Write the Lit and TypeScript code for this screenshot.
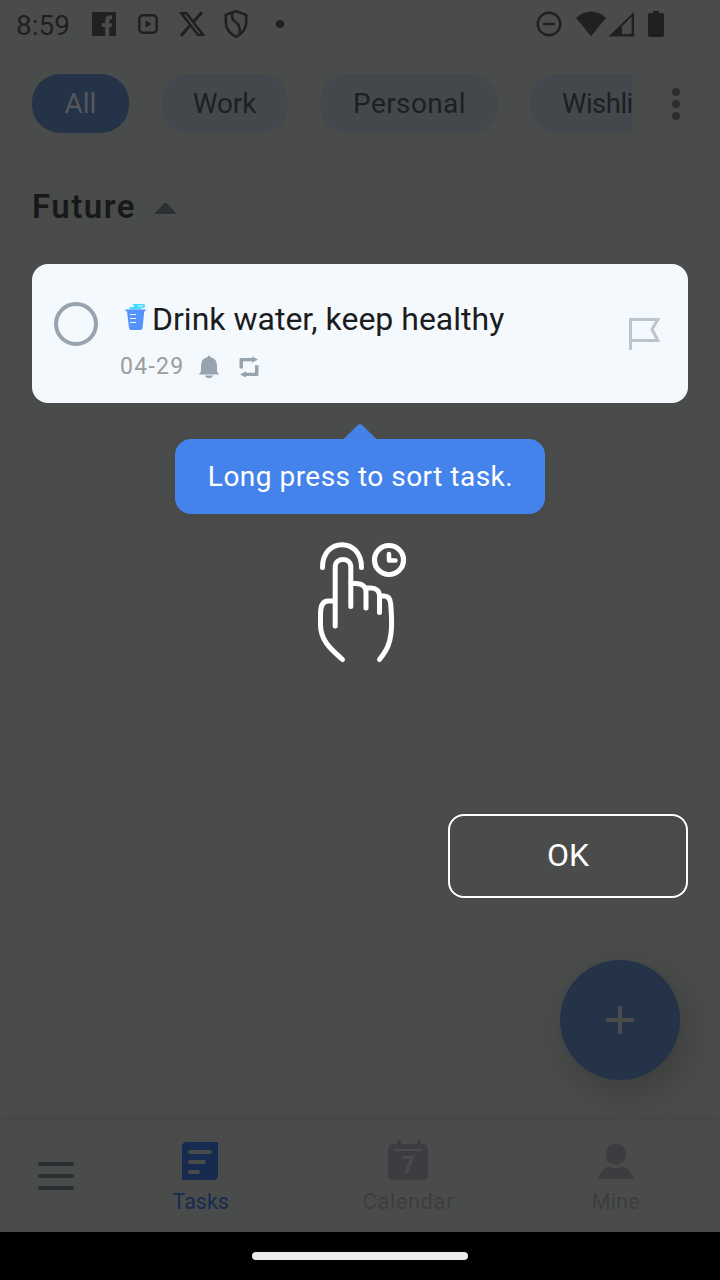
import { LitElement, html, css } from "lit";
import { customElement } from "lit/decorators.js";

@customElement("status-bar")
class StatusBar extends LitElement {
  static styles = css`
    :host { display: flex; height: 48px; color: #1f201f; }
    svg { display: block; fill: currentColor; }
    .time { width: 76px; padding-left: 16px; box-sizing: border-box; font: 28px/51px Roboto, sans-serif; white-space: nowrap; }
  `;
  render() {
    return html`
      <div class="time">8:59</div>
      <svg width="644" height="48" viewBox="76 0 644 48">
        <path d="M92 12H116V36H109.300V27H111.700V23.300H109.300V21.500Q109.300 19 112 19V15.300Q105.200 15 105.200 20.500V23.300H101.700V27H105.200V36H92Z" />
        <rect x="139.300" y="15.300" width="17.400" height="17.400" rx="3.500" fill="none" stroke="currentColor" stroke-width="2.400" />
        <path d="M145.500 20.300V27.700L151.500 24Z" />
        <path d="M181.300 13.200H186.500L203 34.800H197.800Z" fill="none" stroke="currentColor" stroke-width="2.500" />
        <path d="M202 12.200L193.800 21.500M189.500 26L181 35.800" fill="none" stroke="currentColor" stroke-width="3" />
        <path d="M236 11.200L246.200 14.800V22Q246.200 31.800 236 36.800Q225.800 31.800 225.800 22V14.800Z" fill="none" stroke="currentColor" stroke-width="2.600" />
        <path d="M232.200 13V17Q232.200 20 236 22.500Q240.800 25.500 239.500 33.500" fill="none" stroke="currentColor" stroke-width="2.400" />
        <circle cx="280" cy="24" r="4.100" />
        <circle cx="549" cy="24" r="11.300" fill="none" stroke="currentColor" stroke-width="2.400" />
        <path d="M543 22.800H555V25.200H543Z" />
        <path d="M576 17.800Q591 5 606 17.800L591 36.200Z" />
        <path fill-rule="evenodd" d="M608.500 36.500L634 12V36.500ZM622 26.200V34H631.600V17Z" />
        <path d="M653 11H659V13H662Q664 13 664 15V35Q664 37 662 37H650Q648 37 648 35V15Q648 13 650 13H653Z" />
      </svg>
    `;
  }
}

@customElement("category-bar")
class CategoryBar extends LitElement {
  static styles = css`
    :host { display: flex; height: 59px; padding: 26px 0 0 32px; }
    .chips { display: flex; gap: 32px; width: 600px; overflow: hidden; }
    .chip { flex: none; box-sizing: border-box; border-radius: 28px; background: #44474c; color: #1d1f22; text-align: center; font: 28px/59px Roboto, sans-serif; white-space: nowrap; }
    .all { width: 97px; background: #253349; color: #55565a; }
    .work { width: 127px; letter-spacing: -0.1px; }
    .personal { width: 178px; padding-left: 1px; letter-spacing: 0.4px; }
    .wish { width: 164px; padding-left: 32px; text-align: left; font-size: 27.500px; letter-spacing: -0.5px; }
    .more { display: flex; flex-direction: column; gap: 4px; padding: 14px 0 0 40px; }
    .dot { width: 8px; height: 8px; border-radius: 50%; background: #2c2e2d; }
  `;
  render() {
    return html`
      <div class="chips">
        <div class="chip all">All</div>
        <div class="chip work">Work</div>
        <div class="chip personal">Personal</div>
        <div class="chip wish">Wishlist</div>
      </div>
      <div class="more"><i class="dot"></i><i class="dot"></i><i class="dot"></i></div>
    `;
  }
}

@customElement("task-card")
class TaskCard extends LitElement {
  static styles = css`
    :host { display: flex; box-sizing: border-box; height: 139px; margin: 0 32px; border-radius: 16px; background: #f4f9fd; }
    svg { display: block; flex: none; }
    .check { box-sizing: border-box; width: 44px; height: 44px; margin: 38px 0 0 22px; border: 4px solid #98a3b0; border-radius: 50%; }
    .body { flex: 1; padding: 35px 0 0 22px; }
    .title { display: flex; height: 40px; font: 32px/40px Roboto, sans-serif; color: #1b1c1e; white-space: nowrap; }
    .cup { width: 32px; height: 34px; }
    .meta { display: flex; height: 30px; margin-top: 13px; color: #98a3b0; }
    .date { width: 76px; font: 23px/30px Roboto, sans-serif; letter-spacing: 1.300px; color: #9b9c9e; }
    .flag { margin: 52px 26px 0 0; }
  `;
  render() {
    return html`
      <div class="check"></div>
      <div class="body">
        <div class="title">
          <svg class="cup" viewBox="120 299 32 34">
            <path d="M129.500 309.500V307.500Q129.500 307 130.500 307H134V305H132.500V304H143.500Q145 304 145 306T143.500 308H141V309.500Z" fill="#45d9ff" />
            <path d="M138 306H143" stroke="#f4f9fd" stroke-width="1" />
            <path d="M125.500 309.500H145.500V311.300H144.300L142.500 328Q142.200 330 140.500 330H131Q129.300 330 129 328L127 311.300H125.500Z" fill="#5592ff" />
            <path d="M130 314.500H136M130 318.500H136M130 322.500H136" stroke="#f4f9fd" stroke-width="1.200" />
          </svg>
          <span>Drink water, keep healthy</span>
        </div>
        <div class="meta">
          <span class="date">04-29</span>
          <svg width="70" height="30" viewBox="196 352 70 30" fill="currentColor">
            <path d="M209 355.500Q210.500 355.500 210.500 357.200Q217 358.500 217 365.500V370.500Q217 372.500 219.500 374.500H198.500Q201 372.500 201 370.500V365.500Q201 358.500 207.500 357.200Q207.500 355.500 209 355.500Z" />
            <path d="M205 375.500H213Q212 378.300 209 378.300T205 375.500Z" />
            <path d="M239.500 368.500V359.500Q239.500 358 241 358H252V356.500L258 359.500L252 362.800V361.200H243V368.500Z" />
            <path d="M258.500 365.300V374.500Q258.500 376 257 376H246V377.500L240 374.500L246 371.200V372.800H255V365.300Z" />
          </svg>
        </div>
      </div>
      <svg class="flag" width="36" height="40" viewBox="626 316 36 40">
        <path d="M630.500 350V319.500H657.800L652 329.300L657.800 340.500H630.500" fill="none" stroke="#bdc4cb" stroke-width="3" />
      </svg>
    `;
  }
}

@customElement("sort-hint")
class SortHint extends LitElement {
  static styles = css`
    :host { display: flex; flex-direction: column; align-items: center; padding-top: 20px; }
    svg { display: block; }
    .bubble { box-sizing: border-box; width: 370px; height: 75px; padding-left: 1px; border-radius: 16px; background: #4583ec; color: #fff; text-align: center; font: 28px/75px Roboto, sans-serif; letter-spacing: 0.480px; white-space: nowrap; box-shadow: 0 0 14px rgba(0, 0, 0, 0.06); }
    .hand { margin-top: 21px; }
    .ok { align-self: flex-end; box-sizing: border-box; width: 240px; height: 84px; margin: 144px 32px 0 0; border: 2px solid #fff; border-radius: 16px; color: #fff; text-align: center; font: 32px/79px Roboto, sans-serif; }
  `;
  render() {
    return html`
      <svg width="36" height="16" viewBox="0 0 36 16"><path d="M1 16.500L16 2Q18 .2 20 2L35 16.500Z" fill="#4583ec" /></svg>
      <div class="bubble">Long press to sort task.</div>
      <svg class="hand" width="120" height="135" viewBox="300 535 120 135" fill="none" stroke="#fff" stroke-linecap="round" stroke-linejoin="round" stroke-width="5">
        <path d="M322.500 567.500C322.500 537 361.500 537 361.500 567.500" />
        <path d="M335.200 626V567C335.200 557 350.800 557 350.800 567V606.500" />
        <path d="M351 583.500H356C362 583.500 366 586.500 366 592V608" />
        <path d="M366.500 588H371C376 588 379.500 591 379.500 596V612.500" />
        <path d="M381 596H384C388 596 390.300 598.500 390.700 604C392 620 393 638 386 650Q383.500 654.500 379.500 659.500" />
        <path d="M334 601H328C322.500 601 320.500 605.500 320.500 614V625C320.500 641 332 650 342.500 659.500" />
        <circle cx="389" cy="560" r="14.500" stroke-width="5.200" />
        <path d="M389 554V560.500H395.500" stroke-width="4.500" />
      </svg>
      <div class="ok">OK</div>
    `;
  }
}

@customElement("bottom-nav")
class BottomNav extends LitElement {
  static styles = css`
    :host { display: flex; height: 112px; background: #4a4c4b; color: #3c3d40; box-shadow: 0 -2px 8px rgba(0, 0, 0, 0.08); }
    svg { display: block; fill: currentColor; }
    .menu { width: 97px; color: #2b2f33; }
    .item { display: flex; flex-direction: column; align-items: center; width: 207.500px; }
    .label { font: 22px/30px Roboto, sans-serif; margin-top: 3px; white-space: nowrap; }
    .active { color: #172a50; }
    .tasks { font-size: 21.500px; }
    .calendar { letter-spacing: 0.500px; }
    .shift { margin-right: 1.500px; }
    .seven { font: 700 23px Roboto, sans-serif; fill: #4a4c4b; }
  `;
  render() {
    const cut = "#4a4c4b";
    return html`
      <svg class="menu" width="97" height="112" viewBox="0 1120 97 112">
        <path d="M40 1164H72M40 1176H72M40 1188H72" stroke="currentColor" stroke-width="4" stroke-linecap="round" />
      </svg>
      <div class="item active">
        <svg class="shift" width="48" height="64" viewBox="176 1120 48 64">
          <path d="M187 1142H217Q218 1142 218 1143V1175Q218 1180 213 1180H183Q182 1180 182 1179V1147Q182 1142 187 1142Z" />
          <path d="M190 1152H210M190 1162H204M190 1172H198" stroke=${cut} stroke-width="4" stroke-linecap="round" />
        </svg>
        <span class="label tasks">Tasks</span>
      </div>
      <div class="item">
        <svg width="48" height="64" viewBox="384 1120 48 64">
          <rect x="388" y="1144" width="40" height="36" rx="5" />
          <path d="M399 1142V1146M419 1142V1146" stroke="currentColor" stroke-width="4" stroke-linecap="round" />
          <path d="M395 1150H421" stroke=${cut} stroke-width="2" stroke-linecap="round" />
          <text class="seven" x="408" y="1172.500" text-anchor="middle">7</text>
        </svg>
        <span class="label calendar">Calendar</span>
      </div>
      <div class="item">
        <svg width="48" height="64" viewBox="592.300 1120 48 64">
          <circle cx="616.200" cy="1154.300" r="10.500" />
          <path d="M598 1179C600 1173 604 1168.500 609 1166Q616 1170 623 1166C628 1168.500 632 1173 634.500 1179Z" />
        </svg>
        <span class="label">Mine</span>
      </div>
    `;
  }
}

@customElement("app-root")
class AppRoot extends LitElement {
  static styles = css`
    :host { display: flex; flex-direction: column; position: relative; width: 720px; height: 1280px; overflow: hidden; background: #4a4c4b; }
    .section { display: flex; align-items: center; height: 48px; padding: 50px 0 33px 32px; color: #171918; font: 600 33px/50px Roboto, sans-serif; letter-spacing: 1.500px; }
    .name { width: 122px; }
    .spacer { flex: 1; }
    .fab { position: absolute; left: 560px; top: 960px; width: 120px; height: 120px; border-radius: 50%; background: #253349; box-shadow: 6px 12px 36px rgba(0, 0, 0, 0.2); }
    svg { display: block; }
    .home { display: flex; justify-content: center; height: 28px; padding-top: 20px; background: #000; }
    .pill { width: 216px; height: 8px; border-radius: 4px; background: #ebebeb; }
    bottom-nav { position: relative; }
  `;
  render() {
    return html`
      <status-bar></status-bar>
      <category-bar></category-bar>
      <div class="section">
        <span class="name">Future</span>
        <svg width="24" height="14" viewBox="154 200 24 14"><path d="M155 213L164 203.500Q165.500 202 167 203.500L176 213Q176.500 214 175.500 214H155.500Q154.500 214 155 213Z" fill="#2c3034" /></svg>
      </div>
      <task-card></task-card>
      <sort-hint></sort-hint>
      <div class="spacer"></div>
      <div class="fab">
        <svg width="120" height="120" viewBox="0 0 120 120"><path d="M46 60H74M60 46V74" stroke="#4a4c4b" stroke-width="4" /></svg>
      </div>
      <bottom-nav></bottom-nav>
      <div class="home"><div class="pill"></div></div>
    `;
  }
}
